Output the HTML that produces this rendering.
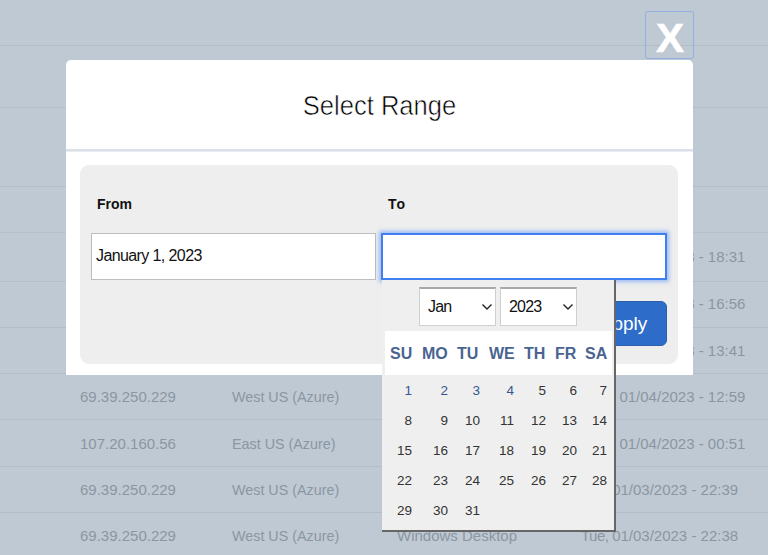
<!DOCTYPE html>
<html><head><meta charset="utf-8">
<style>
*{margin:0;padding:0;box-sizing:border-box}
html,body{width:768px;height:555px;overflow:hidden}
body{position:relative;background:#bfc9d3;font-family:"Liberation Sans",sans-serif}
.ln{position:absolute;left:0;width:768px;height:1px;background:#b3bdc8}
.bt{position:absolute;color:#8b96a2;font-size:15px;line-height:18px;white-space:nowrap;transform-origin:0 0}
.wd{letter-spacing:-0.75px}
.sl{transform:scaleX(0.955)}
#xbtn{position:absolute;left:645px;top:11px;width:49px;height:48px;border:1.5px solid #92afe0;border-radius:3px}
#xg{position:absolute;left:656px;top:17px;-webkit-text-stroke:0.6px #fff;color:#fff;font-weight:bold;font-size:40px;line-height:42px;transform:scaleX(1.05);transform-origin:0 0}
#modal{position:absolute;left:66px;top:60px;width:627px;height:315px;background:#fff;border-radius:5px 5px 0 0}
#title{position:absolute;left:0;top:89px;width:759px;text-align:center;font-size:28px;line-height:34px;color:#000;-webkit-text-stroke:0.6px #fff;transform:scaleX(0.913);transform-origin:379.5px 0}
#sep{position:absolute;left:66px;top:149px;width:627px;height:2px;background:#d9e0e8;box-shadow:0 1px 0 #e9edf2}
#panel{position:absolute;left:80px;top:165px;width:598px;height:199px;background:#eeeeee;border-radius:9px}
.lbl{position:absolute;font-weight:bold;font-size:14px;line-height:16px;color:#111}
.inp{position:absolute;background:#fff}
#from{left:91px;top:233px;width:285px;height:47px;border:1px solid #bdbdbd}
#fromtxt{position:absolute;left:96px;top:247px;font-size:16px;line-height:18px;letter-spacing:-0.6px;color:#111}
#to{left:381px;top:233px;width:286px;height:47px;border:2px solid #3f7ff2;box-shadow:0 0 4px 2px rgba(90,145,245,.55)}
#apply{position:absolute;left:580px;top:301px;width:87px;height:45px;background:#2d6cc8;border:1px solid #2a5fae;border-radius:6px;color:#fff;font-size:19px;line-height:43px;text-align:center}
#cal{position:absolute;left:382px;top:280px;width:234px;height:252px;background:#efefef;border-right:2px solid #666;border-bottom:2px solid #666}
.sel{position:absolute;top:7px;height:39px;width:77px;background:#fff;border:1px solid #cfcfcf;border-top:2px solid #a8a8a8;font-size:16px;line-height:36px;letter-spacing:-0.8px;color:#111;padding-left:8px}
.chev{position:absolute;left:62px;top:15px;width:10px;height:6px;overflow:visible}
#hdr{position:absolute;left:3px;top:51px;width:227px;height:44px;background:#fff}
.dh{position:absolute;top:65px;font-weight:bold;font-size:16px;line-height:18px;color:#4a6491}
.d{position:absolute;font-size:13.5px;line-height:16px;color:#333;text-align:right;width:30px}
.d.b{color:#35598f}
</style></head><body>
<div class="ln" style="top:45px"></div>
<div class="ln" style="top:107px"></div>
<div class="ln" style="top:186px"></div>
<div class="ln" style="top:232px;opacity:.6"></div>
<div class="ln" style="top:281px"></div>
<div class="ln" style="top:327px"></div>
<div class="ln" style="top:373px"></div>
<div class="ln" style="top:419px"></div>
<div class="ln" style="top:466px"></div>
<div class="ln" style="top:512px"></div>

<div class="bt" style="left:581px;top:248px"><span class="wd" style="letter-spacing:-0.1px">Wed, </span>01/04/2023 - 18:31</div>
<div class="bt" style="left:581px;top:295px"><span class="wd" style="letter-spacing:-0.1px">Wed, </span>01/04/2023 - 16:56</div>
<div class="bt" style="left:581px;top:342px"><span class="wd" style="letter-spacing:-0.1px">Wed, </span>01/04/2023 - 13:41</div>

<div class="bt" style="left:80px;top:388px">69.39.250.229</div>
<div class="bt sl" style="left:232px;top:388px">West US (Azure)</div>
<div class="bt" style="left:397px;top:388px">Windows Desktop</div>
<div class="bt" style="left:581px;top:388px"><span class="wd" style="letter-spacing:-0.1px">Wed, </span>01/04/2023 - 12:59</div>

<div class="bt" style="left:80px;top:435px">107.20.160.56</div>
<div class="bt sl" style="left:232px;top:435px">East US (Azure)</div>
<div class="bt" style="left:397px;top:435px">Windows Desktop</div>
<div class="bt" style="left:581px;top:435px"><span class="wd" style="letter-spacing:-0.1px">Wed, </span>01/04/2023 - 00:51</div>

<div class="bt" style="left:80px;top:481px">69.39.250.229</div>
<div class="bt sl" style="left:232px;top:481px">West US (Azure)</div>
<div class="bt" style="left:397px;top:481px">Windows Desktop</div>
<div class="bt" style="left:581px;top:481px"><span class="wd" style="letter-spacing:-0.5px">Tue, </span>01/03/2023 - 22:39</div>

<div class="bt" style="left:80px;top:527px">69.39.250.229</div>
<div class="bt sl" style="left:232px;top:527px">West US (Azure)</div>
<div class="bt" style="left:397px;top:527px">Windows Desktop</div>
<div class="bt" style="left:581px;top:527px"><span class="wd" style="letter-spacing:-0.5px">Tue, </span>01/03/2023 - 22:38</div>

<div id="xbtn"></div><div id="xg">X</div>

<div id="modal"></div>
<div id="title">Select Range</div>
<div id="sep"></div>
<div id="panel"></div>
<div class="lbl" style="left:97px;top:196px">From</div>
<div class="lbl" style="left:388px;top:196px;letter-spacing:1px">To</div>
<div class="inp" id="from"></div>
<div id="fromtxt">January 1, 2023</div>
<div class="inp" id="to"></div>
<div id="apply">Apply</div>

<div id="cal">
  <div class="sel" style="left:37px">Jan<svg class="chev" viewBox="0 0 10 6"><path d="M0.5 0.5 L5 5 L9.5 0.5" fill="none" stroke="#222" stroke-width="1.4"/></svg></div>
  <div class="sel" style="left:118px">2023<svg class="chev" viewBox="0 0 10 6"><path d="M0.5 0.5 L5 5 L9.5 0.5" fill="none" stroke="#222" stroke-width="1.4"/></svg></div>
  <div id="hdr"></div>
  <div class="dh" style="left:8px">SU</div>
  <div class="dh" style="left:40px">MO</div>
  <div class="dh" style="left:75px">TU</div>
  <div class="dh" style="left:107px">WE</div>
  <div class="dh" style="left:142px">TH</div>
  <div class="dh" style="left:173px">FR</div>
  <div class="dh" style="left:203px">SA</div>
  <div class="d b" style="left:0px;top:103px">1</div>
  <div class="d b" style="left:36px;top:103px">2</div>
  <div class="d b" style="left:68px;top:103px">3</div>
  <div class="d b" style="left:102px;top:103px">4</div>
  <div class="d" style="left:134px;top:103px">5</div>
  <div class="d" style="left:165px;top:103px">6</div>
  <div class="d" style="left:195px;top:103px">7</div>
  <div class="d" style="left:0px;top:132.5px">8</div>
  <div class="d" style="left:36px;top:132.5px">9</div>
  <div class="d" style="left:68px;top:132.5px">10</div>
  <div class="d" style="left:102px;top:132.5px">11</div>
  <div class="d" style="left:134px;top:132.5px">12</div>
  <div class="d" style="left:165px;top:132.5px">13</div>
  <div class="d" style="left:195px;top:132.5px">14</div>
  <div class="d" style="left:0px;top:163px">15</div>
  <div class="d" style="left:36px;top:163px">16</div>
  <div class="d" style="left:68px;top:163px">17</div>
  <div class="d" style="left:102px;top:163px">18</div>
  <div class="d" style="left:134px;top:163px">19</div>
  <div class="d" style="left:165px;top:163px">20</div>
  <div class="d" style="left:195px;top:163px">21</div>
  <div class="d" style="left:0px;top:193px">22</div>
  <div class="d" style="left:36px;top:193px">23</div>
  <div class="d" style="left:68px;top:193px">24</div>
  <div class="d" style="left:102px;top:193px">25</div>
  <div class="d" style="left:134px;top:193px">26</div>
  <div class="d" style="left:165px;top:193px">27</div>
  <div class="d" style="left:195px;top:193px">28</div>
  <div class="d" style="left:0px;top:223px">29</div>
  <div class="d" style="left:36px;top:223px">30</div>
  <div class="d" style="left:68px;top:223px">31</div>
</div>
</body></html>
